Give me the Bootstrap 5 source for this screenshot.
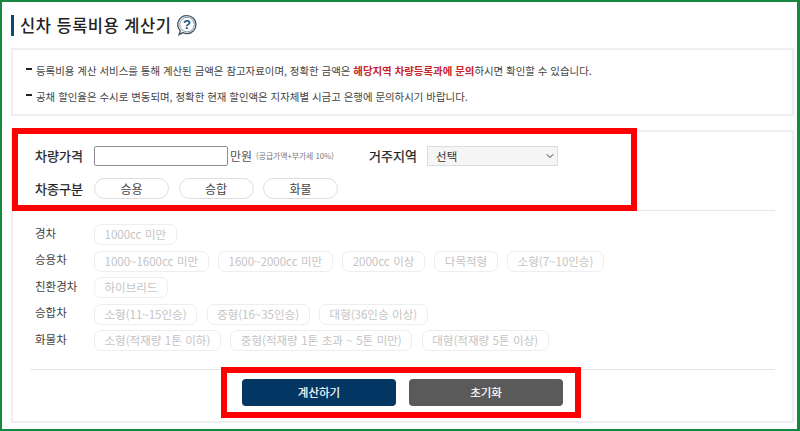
<!DOCTYPE html>
<html lang="ko">
<head>
<meta charset="utf-8">
<title>신차 등록비용 계산기</title>
<link href="https://cdn.jsdelivr.net/npm/bootstrap@5.3.0/dist/css/bootstrap.min.css" rel="stylesheet">
<style>
html,body{height:431px;overflow:hidden}
body{font-family:"Noto Sans CJK KR","Noto Sans",sans-serif;background:#fff;color:#333}
.page-frame{height:431px;border:solid #17873f;border-width:2px 3px 2px 2px;padding:0 3px 0 9px;position:relative}
.ttl-row{height:46px;padding-top:13px;gap:6px}
.ttl-bar{width:3px;height:21px;background:#0b4a7d}
.ttl-text{font-size:16.5px;font-weight:500;line-height:21px;color:#222;letter-spacing:.5px}
.ttl-icon{margin:-1px 0 0 -1px}
.note-box{height:68px;border:2px solid #eee;padding:12px 0 0 13px;font-size:10.45px;color:#444}
.note-line{height:26px;line-height:17px;gap:4px}
.note-dash{width:6px;height:2px;background:#222;margin-top:6px}
.note-red{color:#c9252d;font-weight:700}
.form-panel{margin-top:14px;height:293px;border:2px solid #eee;padding:0 17px}
.top-area{height:79px;padding:14px 0 0 5px;border-bottom:1px solid #e6e6e6}
.lbl{width:59px;font-size:13px;font-weight:400;color:#222;flex:none;-webkit-text-stroke:.25px #222}
.price-input{width:134px;height:20px;border:1px solid #8f8f8f;border-radius:2px;background:#fff;padding:0 4px}
.unit{font-size:12px;color:#555;margin-left:2px}
.unit-note{font-size:7.8px;color:#777;margin-left:4px;width:114px}
.lbl-region{width:58px;margin-left:-1px}
.region-sel{width:131px;height:20px;padding:0 0 0 8px;font-size:11.5px;font-weight:400;border:1px solid #ddd;border-radius:0;background-color:#f5f5f5;background-size:10px 8px;background-position:right 2px center;color:#333;line-height:18px;min-height:0}
.pill-btn{width:75px;height:21px;border:1px solid #ddd;border-radius:11px;background:#fff;font-size:12px;color:#444;padding:1px 0 0;line-height:18px}
.row-two{margin-top:12px;gap:9.5px}
.row-two .lbl{margin-right:-9.5px}
.chip-area{height:159px;padding:13px 0 0 5px;border-bottom:1px solid #e6e6e6}
.chip-row{height:21px;margin-bottom:5.5px;gap:9.5px}
.chip-lbl{width:59px;font-size:11.5px;color:#444;flex:none;margin-right:-9.5px;margin-top:-2px}
.chip{height:21px;border:1px solid #eee;border-radius:7px;padding:0 9.5px;font-size:11.5px;color:#c4c4c4;background:#fff;line-height:19px;white-space:nowrap;word-spacing:.3px}
.act-row{padding-top:9px;gap:13px}
.act-btn{width:154px;height:27px;border-radius:4px;border:0;padding:0;font-size:11.5px;font-weight:400;color:#fff;line-height:27px;-webkit-text-stroke:.2px #fff}
.act-calc,.act-calc:hover{background:#033662;color:#fff}
.act-reset,.act-reset:hover{background:#5a5a5a;color:#fff}
.red-mark{position:absolute;border:6px solid #f00;pointer-events:none}
.mark-a{left:10px;top:126px;width:625px;height:83px}
.mark-b{left:219px;top:365px;width:360px;height:51px}
</style>
</head>
<body>
<div class="page-frame">
  <div class="ttl-row d-flex align-items-start">
    <span class="ttl-bar"></span>
    <span class="ttl-text">신차 등록비용 계산기</span>
    <svg class="ttl-icon" width="22" height="22" viewBox="0 0 22 22" aria-hidden="true">
      <path d="M11 1.6a9 9 0 0 1 0 18c-1.5 0-2.9-.4-4.1-1l-3.8 2 1.2-3.8A9 9 0 0 1 11 1.6z" fill="none" stroke="#3f5563" stroke-width="1.3"/>
      <circle cx="11" cy="10.6" r="7.3" fill="none" stroke="#7f97a5" stroke-width="1"/>
      <text x="11" y="15.2" text-anchor="middle" font-size="13" font-weight="700" fill="#12527f" font-family="Liberation Sans">?</text>
    </svg>
  </div>
  <div class="note-box">
    <div class="note-line d-flex"><span class="note-dash"></span><span>등록비용 계산 서비스를 통해 계산된 금액은 참고자료이며, 정확한 금액은 <span class="note-red">해당지역 차량등록과에 문의</span>하시면 확인할 수 있습니다.</span></div>
    <div class="note-line d-flex"><span class="note-dash"></span><span>공채 할인율은 수시로 변동되며, 정확한 현재 할인액은 지자체별 시금고 은행에 문의하시기 바랍니다.</span></div>
  </div>
  <div class="form-panel">
    <div class="top-area">
      <div class="d-flex align-items-center">
        <span class="lbl">차량가격</span>
        <input class="price-input" type="text" aria-label="차량가격">
        <span class="unit">만원</span>
        <span class="unit-note">(공급가액+부가세 10%)</span>
        <span class="lbl lbl-region">거주지역</span>
        <select class="form-select region-sel" aria-label="거주지역"><option>선택</option></select>
      </div>
      <div class="d-flex align-items-center row-two">
        <span class="lbl">차종구분</span>
        <button type="button" class="btn pill-btn">승용</button>
        <button type="button" class="btn pill-btn">승합</button>
        <button type="button" class="btn pill-btn">화물</button>
      </div>
    </div>
    <div class="chip-area">
      <div class="chip-row d-flex align-items-center"><span class="chip-lbl">경차</span><span class="chip">1000cc 미만</span></div>
      <div class="chip-row d-flex align-items-center"><span class="chip-lbl">승용차</span><span class="chip">1000~1600cc 미만</span><span class="chip">1600~2000cc 미만</span><span class="chip">2000cc 이상</span><span class="chip">다목적형</span><span class="chip">소형(7~10인승)</span></div>
      <div class="chip-row d-flex align-items-center"><span class="chip-lbl">친환경차</span><span class="chip">하이브리드</span></div>
      <div class="chip-row d-flex align-items-center"><span class="chip-lbl">승합차</span><span class="chip">소형(11~15인승)</span><span class="chip">중형(16~35인승)</span><span class="chip">대형(36인승 이상)</span></div>
      <div class="chip-row d-flex align-items-center"><span class="chip-lbl">화물차</span><span class="chip">소형(적재량 1톤 이하)</span><span class="chip">중형(적재량 1톤 초과 ~ 5톤 미만)</span><span class="chip">대형(적재량 5톤 이상)</span></div>
    </div>
    <div class="act-row d-flex justify-content-center">
      <button type="button" class="btn act-btn act-calc">계산하기</button>
      <button type="button" class="btn act-btn act-reset">초기화</button>
    </div>
  </div>
  <div class="red-mark mark-a"></div>
  <div class="red-mark mark-b"></div>
</div>
<script src="https://cdn.jsdelivr.net/npm/bootstrap@5.3.0/dist/js/bootstrap.bundle.min.js"></script>
</body>
</html>
